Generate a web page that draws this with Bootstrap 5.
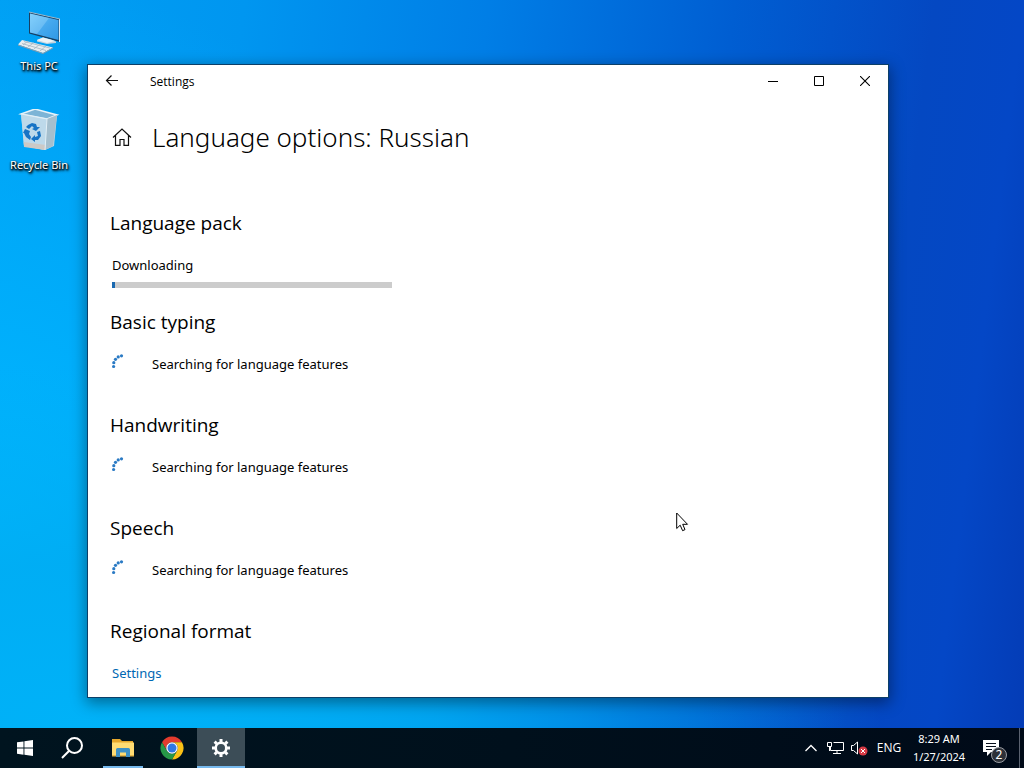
<!DOCTYPE html>
<html lang="en">
<head>
<meta charset="utf-8">
<meta name="viewport" content="width=device-width, initial-scale=1">
<title>Settings</title>
<link href="https://cdn.jsdelivr.net/npm/bootstrap@5.3.0/dist/css/bootstrap.min.css" rel="stylesheet">
<style>
  body { font-family: "Noto Sans", "Open Sans", sans-serif; font-size: 13px; line-height: 20px; color: #000; }
  button { border: 0; background: transparent; color: inherit; padding: 0; }
  svg { display: block; flex: none; }
  .desktop {
    background:
      radial-gradient(ellipse 78% 50% at 8% 100%, #00b2f8 0, #00acf2d0 45%, #009ce600 100%),
      radial-gradient(ellipse 50% 75% at 0 72%, #00b7ff 0, #00b0fcb0 50%, #00a0f000 100%),
      linear-gradient(97deg, #00a0f4 0, #0096f0 22%, #007ee6 44%, #005ed2 66%, #0448c2 84%, #0447c6 92%, #043cb6 100%);
  }
  .shortcut { width: 78px; font-size: 11px; line-height: 16px; color: #fff; text-decoration: none; text-shadow: 0 1px 2px #000, 1px 1px 2px #000, 1px 2px 3px #000; }
  .shortcuts { gap: 35px; padding-top: 10px; }
  .app-window { inset: 65px 136px 31px 88px; background: #fff; outline: 1px solid #0c3f68; box-shadow: 0 4px 14px 2px #0006; }
  .title-bar { height: 32px; font-family: "Open Sans", "Noto Sans", sans-serif; font-size: 12px; }
  .back-btn { width: 48px; }
  .caption-btn { width: 46px; }
  .app-title { padding: 2px 0 0 14px; }
  .page-head { padding: 18px 24px 0; gap: 20px; }
  .page-head h1 { font-size: 26px; line-height: 44px; font-weight: 300; }
  .page-body { padding: 50px 24px 14px; }
  .page-body h2 { font-family: "Open Sans", "Noto Sans", sans-serif; font-size: 19px; line-height: 28px; font-weight: 400; margin: 0 0 18px -2px; }
  .feature { margin-bottom: 37px; }
  .pack { margin-bottom: 20px; }
  .pack .progress { width: 280px; max-width: 100%; height: 6px; margin-top: 7px; background: #ccc; }
  .pack .progress-bar { background: #1a69b0; }
  .busy { gap: 28px; }
  .settings-link { color: #0067b3; text-decoration: none; }
  .taskbar { height: 40px; background: linear-gradient(90deg, #00141f, #00101c 50%, #000a18); color: #fff; }
  .task-list { gap: 1px; padding-left: 1px; }
  .task-btn { width: 48px; border-bottom: 2px solid transparent; padding-top: 2px; }
  .task-btn.running { background: linear-gradient(#76b9ed, #76b9ed) center bottom / 40px 2px no-repeat border-box; }
  .task-btn.current { background: #3c4d57; border-bottom-color: #76b9ed; }
  .tray-btn { width: 24px; }
  .lang-btn { width: 36px; font-family: "Open Sans", "Noto Sans", sans-serif; font-size: 12px; }
  .clock { width: 64px; font-size: 11px; line-height: 18px; }
  .notif-btn { width: 48px; padding-right: 7px; }
  .peek { width: 5px; border-left: 1px solid #5a6270; }
  .notif-badge { width: 16px; height: 16px; left: 20px; top: 19px; font-size: 12px; line-height: 14px; background: #2d3138; border: 1px solid #9a9da3; }
  .pointer { left: 676px; top: 512px; }
</style>
</head>
<body class="vh-100 d-flex flex-column overflow-hidden">
<svg width="0" height="0" class="position-absolute" aria-hidden="true">
  <symbol id="ring" viewBox="0 0 12 20">
    <g fill="#2a7ac4"><circle cx="1.600" cy="12.500" r="1.600"/><circle cx="1.800" cy="8.700" r="1.600"/><circle cx="3.500" cy="5.300" r="1.600"/><circle cx="6.200" cy="2.900" r="1.600"/><circle cx="9.500" cy="1.800" r="1.600"/></g>
  </symbol>
</svg>

<main class="desktop position-relative flex-fill">
  <nav class="shortcuts d-flex flex-column align-items-start" aria-label="Desktop">
    <a href="#" class="shortcut d-flex flex-column align-items-center">
      <svg width="48" height="48" viewBox="0 0 48 48">
        <defs><linearGradient id="scr" x1="0" y1="0" x2="1" y2="1"><stop offset="0" stop-color="#6fc8fb"/><stop offset=".5" stop-color="#46a9ee"/><stop offset="1" stop-color="#2f98e6"/></linearGradient></defs>
        <path d="M14 2 45 9V32L14 23.500Z" fill="#173f63"/>
        <path d="M44 9h1V32h-1Z" fill="#d8e8f2"/><path d="M14 2 45 9" stroke="#9bb9cc"/>
        <path d="M15 3.500 43.500 10V30L15 22.500Z" fill="url(#scr)"/>
        <path d="M15 3.500 34 8 22 24 15 22.500Z" fill="#b5e4ff" opacity=".3"/>
        <path d="M28 27.500 36 29.500 41 31.500V33L32 34 22 31.500V30Z" fill="#c3d3dd"/><path d="M28 27.500 40 31 32 33 22 30Z" fill="#edf3f6"/>
        <path d="M7 30 38 37.500 28 43 3 34.500Z" fill="#e7edf0"/><path d="M3 34.500V35.500L28 44 38 38.500V37.500L28 43Z" fill="#899eac"/>
        <path d="M9 31.500 35 38M7 33.500 31 40.500M13 31 8 35M19 32.500 13 37M25 34 19 39M31 36 25 41" stroke="#a2b5c0" stroke-width=".8"/>
      </svg>
      <span>This PC</span>
    </a>
    <a href="#" class="shortcut d-flex flex-column align-items-center text-nowrap">
      <svg width="48" height="48" viewBox="0 0 48 48">
        <path d="M6 5 42 7 39 37 30 41 9 37Z" fill="#bcd6e5"/>
        <path d="M6 5 20 0 42 6 32 10Z" fill="#7db4d6" stroke="#e7f3fa" stroke-width="1.500"/>
        <path d="M6 5 32 10 30 41 9 37Z" fill="#bdd9ea"/><path d="M32 10 42 6 38 37 30 41Z" fill="#a5bfce"/>
        <path d="M8.700 33 31 36 30 41 9 38Z" fill="#ccc9c6"/><path d="M6 5 32 10 30 41" fill="none" stroke="#e2eff7"/>
        <g fill="#1673c5" transform="translate(-1 -1)"><path d="M14 17 18 15 22 16 23 19 26 19 22 23 18 21 20 20 18 18 15 21 12 19Z"/><path d="M11 21 16 23 15 26 17 29 16 32 12 29 10 25 9 25Z"/><path d="M23 24 26 23 27 28 24 32 21 32 21 34 17 31 21 27 21 29 24 28Z"/></g>
      </svg>
      <span>Recycle Bin</span>
    </a>
  </nav>

  <section class="app-window position-absolute overflow-auto" aria-label="Settings window">
    <header class="title-bar d-flex">
      <button class="back-btn d-flex align-items-center justify-content-center" aria-label="Back">
        <svg width="14" height="14" viewBox="0 0 14 14" fill="none" stroke="#111" stroke-width="1.200"><path d="M13 6.500H1.500M6.500 1.500 1.500 6.500 6.500 11.500"/></svg>
      </button>
      <span class="app-title align-self-center me-auto">Settings</span>
      <button class="caption-btn d-flex align-items-center justify-content-center" aria-label="Minimize"><svg width="10" height="10"><path d="M0 5.500H10" stroke="#000"/></svg></button>
      <button class="caption-btn d-flex align-items-center justify-content-center" aria-label="Maximize"><svg width="10" height="10"><path d="M.5.500H9.500V9.500H.5Z" fill="none" stroke="#000"/></svg></button>
      <button class="caption-btn d-flex align-items-center justify-content-center" aria-label="Close"><svg width="10" height="10"><path d="M0 0 10 10M10 0 0 10" stroke="#000" stroke-width="1.100"/></svg></button>
    </header>
    <div class="page-head d-flex align-items-center">
      <button aria-label="Home"><svg width="20" height="20" viewBox="0 0 20 20" fill="none" stroke="#111" stroke-width="1.200"><path d="M1 10.500 10 2 19 10.500M3.500 8.500V18.300H8V12.500H12V18.300H16.500V8.500"/></svg></button>
      <h1 class="m-0">Language options: Russian</h1>
    </div>
    <div class="page-body">
      <section class="pack">
        <h2>Language pack</h2>
        <div id="dl">Downloading</div>
        <div class="progress rounded-0" role="progressbar" aria-labelledby="dl" aria-valuenow="1" aria-valuemin="0" aria-valuemax="100"><div class="progress-bar" style="width: 1%"></div></div>
      </section>
      <section class="feature">
        <h2>Basic typing</h2>
        <div class="busy d-flex" role="status"><svg width="12" height="20"><use href="#ring"/></svg><span>Searching for language features</span></div>
      </section>
      <section class="feature">
        <h2>Handwriting</h2>
        <div class="busy d-flex" role="status"><svg width="12" height="20"><use href="#ring"/></svg><span>Searching for language features</span></div>
      </section>
      <section class="feature">
        <h2>Speech</h2>
        <div class="busy d-flex" role="status"><svg width="12" height="20"><use href="#ring"/></svg><span>Searching for language features</span></div>
      </section>
      <section>
        <h2>Regional format</h2>
        <a href="#" class="settings-link d-inline-block">Settings</a>
      </section>
    </div>
  </section>

  <svg class="pointer position-absolute" width="13" height="20" viewBox="0 0 13 20" aria-hidden="true"><path d="M.7 1V16.500L4.200 13.200 6.600 18.700 9 17.600 6.700 12.300H11.500Z" fill="#fff" stroke="#000"/></svg>
</main>

<footer class="taskbar d-flex flex-shrink-0">
  <div class="task-list d-flex">
    <button class="task-btn d-flex align-items-center justify-content-center" aria-label="Start"><svg width="16" height="16" viewBox="0 0 16 16" fill="#fff"><path d="M0 2.300 6.500 1.400V7.500H0ZM7.400 1.200 16 0V7.500H7.400ZM0 8.500H6.500V14.700L0 13.700ZM7.400 8.500H16V16L7.400 14.800Z"/></svg></button>
    <button class="task-btn d-flex align-items-center justify-content-center" aria-label="Search"><svg width="26" height="22" viewBox="0 0 26 22" fill="none" stroke="#fff" stroke-width="2"><circle cx="13.500" cy="8.500" r="7.500"/><path d="M8.200 13.800 1 21"/></svg></button>
    <button class="task-btn running d-flex align-items-center justify-content-center" aria-label="File Explorer"><svg width="22" height="20" viewBox="0 0 22 20"><path d="M0 1H8L10 3H21V8H0Z" fill="#e5a72c"/><path d="M0 4.500H22V18H0Z" fill="#ffdc73"/><path d="M0 17H22V18.500H0Z" fill="#e4b548"/><path d="M4 19V11.500Q4 10 5.500 10H16.500Q18 10 18 11.500V19H14V14.500H8V19Z" fill="#3e91c5"/></svg></button>
    <button class="task-btn d-flex align-items-center justify-content-center" aria-label="Chrome"><svg width="24" height="24" viewBox="0 0 48 48"><path d="M4.080 12.500A23 23 0 0 1 43.920 12.500H24A11.500 11.500 0 0 0 14.040 29.750Z" fill="#e33b2e"/><path d="M43.920 12.500A23 23 0 0 1 24 47L33.960 29.750A11.500 11.500 0 0 0 24 12.500Z" fill="#fbc116"/><path d="M24 47A23 23 0 0 1 4.080 12.500L14.040 29.750A11.500 11.500 0 0 0 33.960 29.750Z" fill="#279847"/><circle cx="24" cy="24" r="11.500" fill="#fff"/><circle cx="24" cy="24" r="9" fill="#2f78e4"/></svg></button>
    <button class="task-btn current d-flex align-items-center justify-content-center" aria-label="Settings"><svg width="20" height="20" viewBox="-10 -10 20 20" fill="none" stroke="#fff"><circle r="5.300" stroke-width="2.600"/><path stroke-width="3" d="M0-6V-9M0 6V9M6 0H9M-6 0H-9M4.300 4.300 6.400 6.400M-4.300 4.300-6.400 6.400M4.300-4.300 6.400-6.400M-4.300-4.300-6.400-6.400"/></svg></button>
  </div>
  <div class="d-flex ms-auto">
    <button class="tray-btn d-flex align-items-center justify-content-center" aria-label="Hidden icons"><svg width="12" height="8" fill="none" stroke="#fff" stroke-width="1.300"><path d="M.5 7 6 1.500 11.500 7"/></svg></button>
    <button class="tray-btn d-flex align-items-center justify-content-center" aria-label="Network"><svg width="17" height="14" fill="none" stroke="#fff"><path d="M6.500 1.500H16.500V9.500H3.500V6M10 9.500V13M6 12.500H14M.5 1.500H4.500V5.500H.5ZM2.500 5.500V10"/></svg></button>
    <button class="tray-btn d-flex align-items-center justify-content-center" aria-label="Volume"><svg width="18" height="16" fill="none" stroke="#fff"><path d="M1.500 5.500H3.500L7.500 2V14L3.500 10.500H1.500Z"/><circle cx="13" cy="11" r="4.500" fill="#d63a45" stroke="none"/><path d="M11 9 15 13M15 9 11 13"/></svg></button>
    <button class="lang-btn">ENG</button>
    <button class="clock"><span class="d-block">8:29 AM</span><span class="d-block">1/27/2024</span></button>
    <button class="notif-btn position-relative d-flex align-items-center justify-content-center" aria-label="2 notifications"><svg width="17" height="18" viewBox="0 0 17 18"><path d="M0 1H16V13H8L4 17V13H0Z" fill="#fff"/><path d="M3 4.500H13M3 7.500H13M3 10.500H9" stroke="#08101c"/></svg><span class="notif-badge position-absolute rounded-circle">2</span></button>
    <button class="peek" aria-label="Show desktop"></button>
  </div>
</footer>
<script src="https://cdn.jsdelivr.net/npm/bootstrap@5.3.0/dist/js/bootstrap.bundle.min.js"></script>
</body>
</html>
